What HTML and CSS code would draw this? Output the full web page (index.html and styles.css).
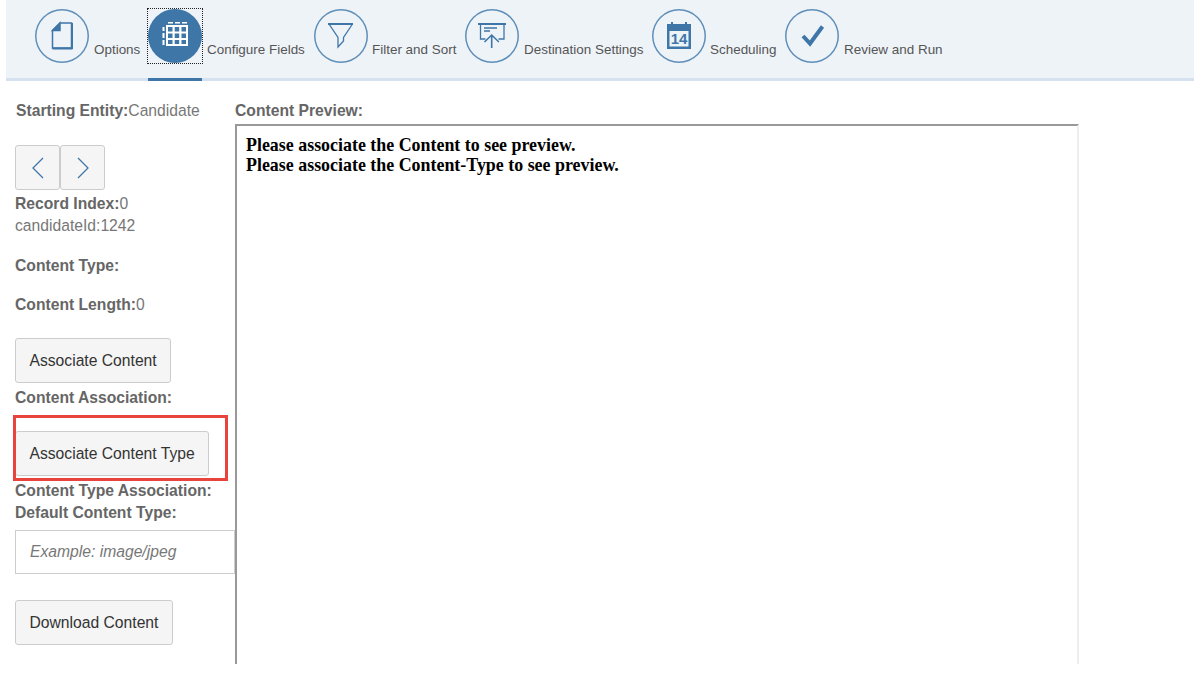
FILE: index.html
```html
<!DOCTYPE html>
<html lang="en">
<head>
    <meta charset="UTF-8">
    <title>Content Preview</title>
    <link rel="stylesheet" href="styles.css">
</head>
<body>
    <div class="page">
        <div class="steps">
            <div class="step step-options">
                <span class="step-circle">
                    <svg width="54" height="54" viewBox="0 0 54 54" fill="none" stroke="#3f76a8" stroke-width="1.500">
                        <path d="M25 14h11.500v25h-19v-17.500z"/>
                        <path d="M25 14v7.500h-7.500z" fill="#3f76a8"/>
                        <path d="M17.500 39.500h20M37 14v26" stroke-width="2"/>
                    </svg>
                </span>
                <span class="step-label">Options</span>
            </div>
            <div class="step step-fields active">
                <span class="step-circle">
                    <svg width="54" height="54" viewBox="0 0 54 54" fill="#fff">
                        <path d="M20 13h5v1.500h-5zM27 13h5v1.500h-5zM34 13h5v1.500h-5z"/>
                        <path d="M18 16h22v21h-22zM20 18v4.500h4.500v-4.500zM26.700 18v4.500h4.500v-4.500zM33.500 18v4.500h4.500v-4.500zM20 24.500v4.500h4.500v-4.500zM26.700 24.500v4.500h4.500v-4.500zM33.500 24.500v4.500h4.500v-4.500zM20 31v4h4.500v-4zM26.700 31v4h4.500v-4zM33.500 31v4h4.500v-4z" fill-rule="evenodd"/>
                        <path d="M14.500 18h2v4h-2zM14.500 24h2v5h-2zM14.500 31h2v5h-2z"/>
                    </svg>
                </span>
                <span class="step-label">Configure Fields</span>
            </div>
            <div class="step step-filter">
                <span class="step-circle">
                    <svg width="54" height="54" viewBox="0 0 54 54" fill="none" stroke="#3f76a8" stroke-width="1.300">
                        <path d="M15 15l9 13.500v9.500l5.500-6v-3.500l9-13.500"/>
                        <path d="M14 15h25" stroke-width="2"/>
                    </svg>
                </span>
                <span class="step-label">Filter and Sort</span>
            </div>
            <div class="step step-dest">
                <span class="step-circle">
                    <svg width="54" height="54" viewBox="0 0 54 54" fill="none" stroke="#3f76a8" stroke-width="1.300">
                        <path d="M13 15h28" stroke-width="2"/>
                        <path d="M15.500 15v15h5M39 15v15h-5.500"/>
                        <path d="M19 19h13M19 22h6" stroke-width="1.500"/>
                        <path d="M26.700 39v-13M19.500 33l7.200-7l7.200 7" stroke-width="1.600"/>
                    </svg>
                </span>
                <span class="step-label">Destination Settings</span>
            </div>
            <div class="step step-sched">
                <span class="step-circle">
                    <svg width="54" height="54" viewBox="0 0 54 54">
                        <path d="M15 15h4v-2h2v2h12v-2h2v2h4v25h-24z" fill="#3f76a8"/>
                        <rect x="17.500" y="22" width="19" height="15.500" fill="#eef3f8"/>
                        <text x="27" y="35" class="cal-day">14</text>
                    </svg>
                </span>
                <span class="step-label">Scheduling</span>
            </div>
            <div class="step step-review">
                <span class="step-circle">
                    <svg width="54" height="54" viewBox="0 0 54 54" fill="none" stroke="#3f76a8" stroke-width="4">
                        <path d="M18 27l7 7.500l12.500 -17"/>
                    </svg>
                </span>
                <span class="step-label">Review and Run</span>
            </div>
        </div>

        <div class="main">
            <div class="sidebar">
                <div class="row row-entity"><b>Starting Entity:</b>Candidate</div>
                <div class="pager">
                    <button class="btn btn-icon">
                        <svg width="14" height="22" viewBox="0 0 14 22" fill="none" stroke="#3f76a8" stroke-width="1.300"><path d="M12 1l-10 10l10 10"/></svg>
                    </button>
                    <button class="btn btn-icon">
                        <svg width="14" height="22" viewBox="0 0 14 22" fill="none" stroke="#3f76a8" stroke-width="1.300"><path d="M2 1l10 10l-10 10"/></svg>
                    </button>
                </div>
                <div class="row"><b>Record Index:</b>0</div>
                <div class="row">candidateId:1242</div>
                <div class="row row-type"><b>Content Type:</b></div>
                <div class="row row-length"><b>Content Length:</b>0</div>
                <button class="btn btn-text">Associate Content</button>
                <div class="row row-after"><b>Content Association:</b></div>
                <button class="btn btn-text">Associate Content Type</button>
                <div class="row row-after"><b>Content Type Association:</b></div>
                <div class="row"><b>Default Content Type:</b></div>
                <input class="type-input" type="text" placeholder="Example: image/jpeg">
                <button class="btn btn-text btn-download">Download Content</button>
                <div class="highlight"></div>
            </div>
            <div class="preview">
                <div class="preview-title">Content Preview:</div>
                <div class="preview-box">
                    Please associate the Content to see preview.<br>
                    Please associate the Content-Type to see preview.
                </div>
            </div>
        </div>
    </div>
</body>
</html>
```

FILE: styles.css
```css
html, body { margin: 0; padding: 0; background: #fff; overflow: hidden; }
body { font-family: "Liberation Sans", Arial, sans-serif; font-size: 15.680px; color: #777; }
.page { width: 1188px; height: 688px; margin-left: 6px; overflow: hidden; }

.steps { display: flex; align-items: flex-start; height: 78px; padding-left: 29px; background: #eef3f8; border-bottom: 3px solid #d5e1ee; }
.step { display: flex; align-items: flex-start; position: relative; height: 81px; }
.step-circle { display: block; width: 54px; height: 54px; margin-top: 9px; border-radius: 50%; box-shadow: inset 0 0 0 1.500px #5f8fb8; }
.step-circle svg { display: block; }
.step-label { margin-top: 42px; line-height: 16px; font-size: 13.440px; color: #555; white-space: nowrap; }
.step-options { width: 113px; }
.step-options .step-label { margin-left: 5px; }
.step-fields { width: 166px; }
.step-fields .step-label { margin-left: 5px; }
.step-filter { width: 151px; }
.step-filter .step-label { margin-left: 4px; }
.step-dest { width: 187px; }
.step-dest .step-label { margin-left: 5px; }
.step-sched { width: 133px; }
.step-sched .step-label { margin-left: 4px; }
.step-review .step-label { margin-left: 5px; }
.active .step-circle { background: #3f76a8; box-shadow: none; }
.active::before { content: ""; position: absolute; left: -1px; top: 8px; width: 54px; height: 54px; border: 1px dotted #222; }
.active::after { content: ""; position: absolute; left: 0; bottom: 0; width: 54px; height: 3px; background: #3f76a8; }
.cal-day { font-family: "Liberation Sans", Arial, sans-serif; font-size: 15px; font-weight: bold; fill: #3f76a8; text-anchor: middle; }

.main { display: flex; }
.sidebar { position: relative; width: 229px; flex: none; padding-top: 18px; box-sizing: border-box; }
.row { height: 22px; line-height: 24px; margin-left: 9px; white-space: nowrap; }
.row b { color: #666; }
.row-entity { margin-left: 10px; }
.pager { display: flex; margin: 24px 0 2px 9px; }
.row-type { margin-top: 18px; }
.row-length { margin-top: 17px; margin-bottom: 23px; }
.row-after { margin-top: 3px; }
.row-after + .btn { margin-top: 23px; }

.btn { display: block; margin: 0 0 0 9px; background: #f5f5f5; border: 1px solid #ccc; border-radius: 3px; font-family: inherit; color: #333; cursor: pointer; box-sizing: border-box; }
.btn-icon { display: flex; align-items: center; justify-content: center; width: 45px; height: 45px; margin: 0; padding: 0; }
.btn-text { height: 45px; padding: 0 13.500px; font-size: 15.680px; text-align: left; white-space: nowrap; }
.btn-download { margin-top: 26px; }

.type-input { display: block; width: 220px; height: 44px; margin: 7px 0 0 9px; padding: 0 14px; border: 1px solid #ccc; background: #fff; font-family: inherit; font-size: 15.680px; font-style: italic; box-sizing: border-box; }
.type-input::placeholder { color: #777; opacity: 1; }

.highlight { position: absolute; left: 7px; top: 334px; width: 209px; height: 60px; border: 3px solid #e8433c; }

.preview { width: 844px; }
.preview-title { height: 22px; line-height: 24px; margin-top: 18px; margin-bottom: 3px; font-weight: bold; color: #666; }
.preview-box { height: 540px; padding: 9px 9px; border-top: 2px solid #999; border-left: 2px solid #999; border-right: 2px solid #eee; box-sizing: border-box; font-family: "Liberation Serif", "Times New Roman", serif; font-size: 17.920px; font-weight: bold; line-height: 20px; color: #000; }
```
